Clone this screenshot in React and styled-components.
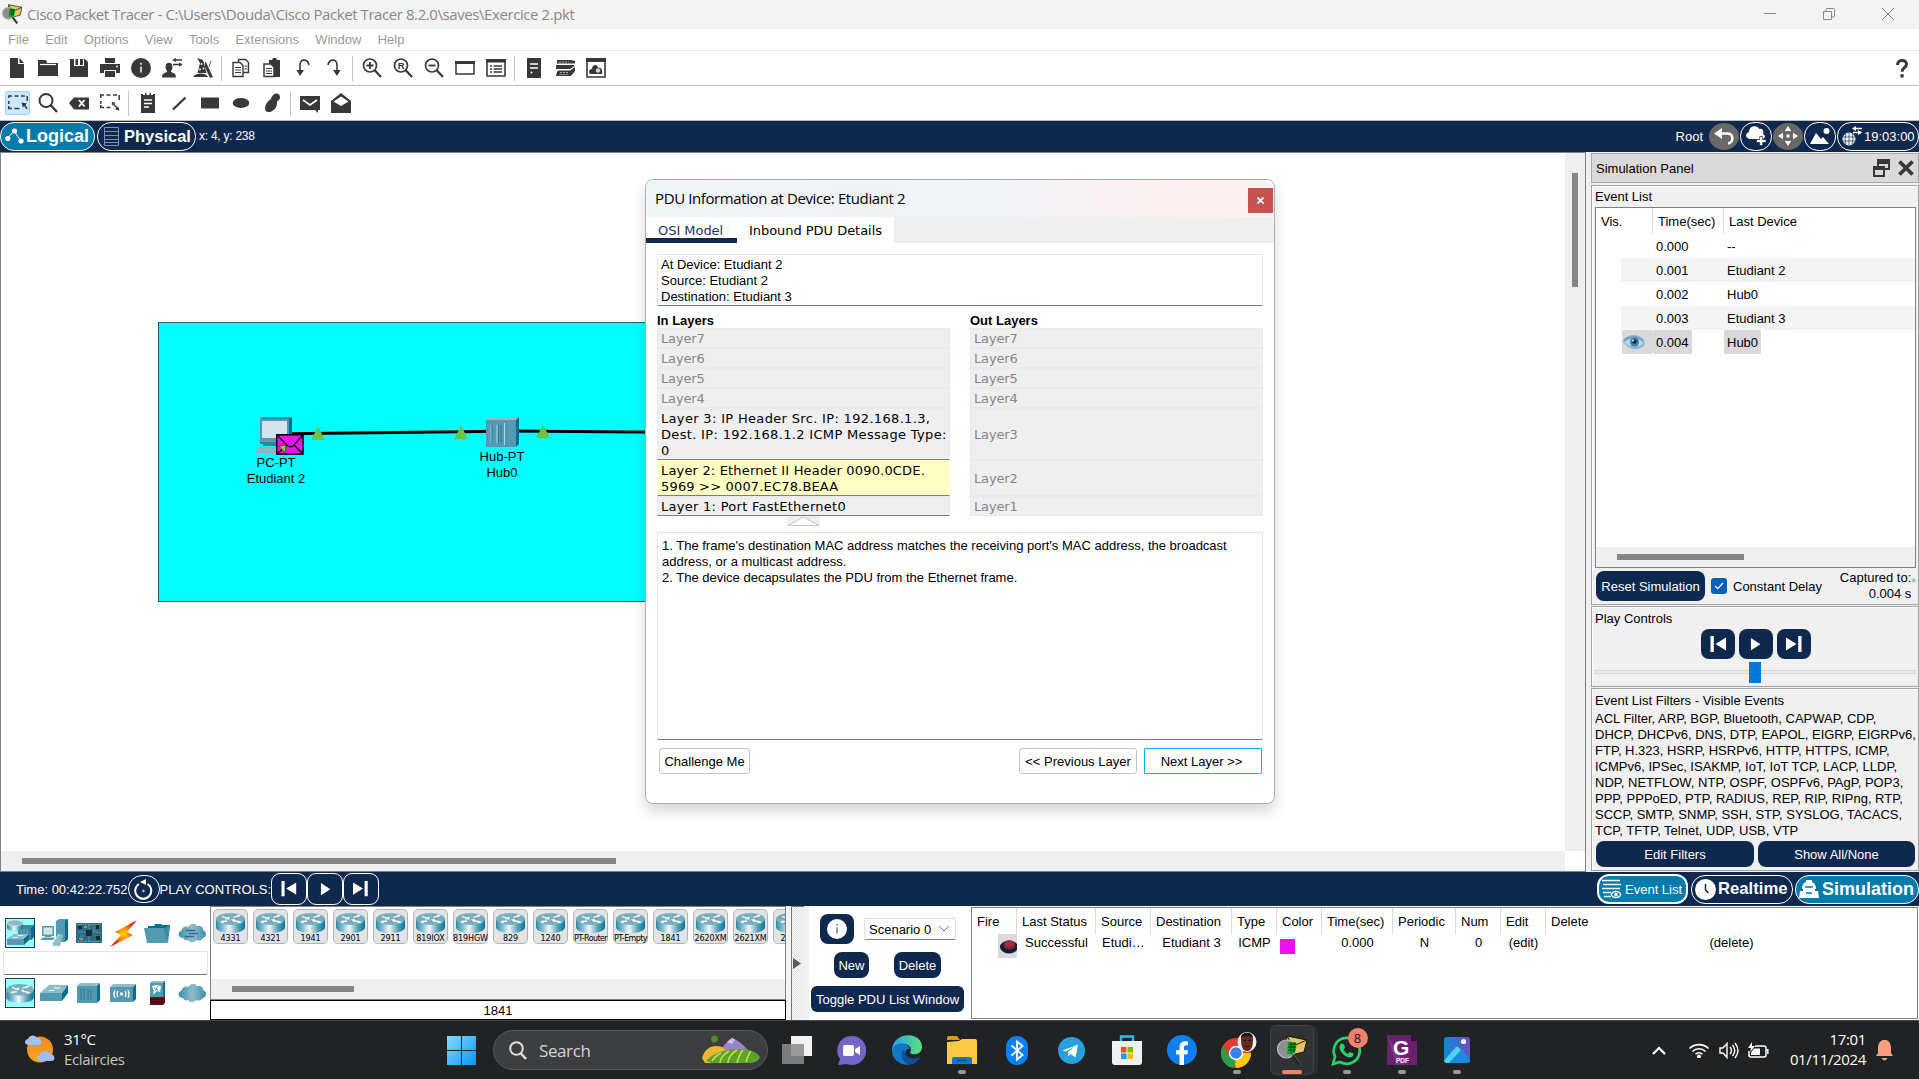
import React from "react";
import styled, { createGlobalStyle, css } from "styled-components";

const NAVY = "#0f284d";
const TEAL = "#027bab";
const INK = "#38383a";
const ARIAL = '"Liberation Sans", Arial, sans-serif';
const SEGOE = '"Open Sans", "Noto Sans", sans-serif';
const VERDANA = '"DejaVu Sans", Verdana, sans-serif';

const Global = createGlobalStyle`
  * { box-sizing: border-box; }
  body { margin: 0; overflow: hidden; font-family: ${ARIAL}; font-size: 13px; color: #000; background: #f0f0f0; }
  svg { display: block; flex: none; }
`;

const Page = styled.div`
  position: relative;
  width: 1919px;
  height: 1079px;
  display: flex;
  flex-direction: column;
  overflow: hidden;
  white-space: nowrap;
`;

/* ---------- window chrome ---------- */
const TitleBar = styled.header`
  height: 29px;
  flex: none;
  display: flex;
  align-items: center;
  padding: 0 25px 1px 2px;
  background: #f3f3f3;
  color: #888;
`;
const WindowTitle = styled.span`
  flex: 1;
  margin-left: 5px;
  font: 15px ${SEGOE};
  letter-spacing: -0.42px;
`;
const WindowButtons = styled.div`
  display: flex;
  gap: 47px;
`;
const MenuBar = styled.nav`
  height: 22px;
  flex: none;
  display: flex;
  align-items: center;
  gap: 16.2px;
  padding: 0 8px;
  background: #fff;
  border-bottom: 1px solid #eaeaea;
  color: #999;
`;
const ToolBar = styled.div`
  height: 35px;
  flex: none;
  display: flex;
  align-items: center;
  padding-left: 1px;
  background: #fff;
  border-bottom: 1px solid #bdbdbd;
`;
const ToolCell = styled.div`
  width: 31px;
  height: 24px;
  flex: none;
  display: flex;
  align-items: center;
  justify-content: center;
`;
const ActiveTool = styled.div`
  width: 25px;
  height: 24px;
  margin-left: 2px;
  display: flex;
  align-items: center;
  justify-content: center;
  background: #cce8ff;
  border: 1px solid #99d1ff;
  border-radius: 2px;
`;
const ToolRule = styled.i`
  width: 1px;
  height: 25px;
  margin: 0 3px;
  background: #c4c4c4;
`;
const HelpSlot = styled.div`
  width: 23px;
`;
const Spacer = styled.div`
  flex: 1;
`;

/* ---------- navigation bar ---------- */
const NavBar = styled.div`
  height: 31px;
  flex: none;
  display: flex;
  align-items: center;
  padding-bottom: 1px;
  background: ${NAVY};
  color: #fff;
`;
const Pill = styled.div`
  height: ${(p) => p.$h || 29}px;
  width: ${(p) => p.$w}px;
  flex: none;
  display: flex;
  align-items: center;
  gap: ${(p) => p.$gap || 0}px;
  margin-left: ${(p) => p.$ml || 0}px;
  padding-left: ${(p) => p.$pl || 0}px;
  ${(p) => p.$center && css`justify-content: center;`}
  border: ${(p) => p.$bw || 1}px solid #fff;
  border-radius: ${(p) => p.$r || 14}px;
  background: ${(p) => (p.$on ? TEAL : "transparent")};
  color: #fff;
  font-weight: ${(p) => (p.$fs ? 700 : 400)};
  font-size: ${(p) => p.$fs || 13}px;
`;
const RoundGrey = styled.div`
  width: 30px;
  height: 27px;
  margin-left: ${(p) => p.$ml}px;
  display: flex;
  align-items: center;
  justify-content: center;
  border-radius: 50%;
  background: #686868;
`;
const Coords = styled.span`
  margin-left: 3px;
  font-size: 12px;
  letter-spacing: -0.25px;
`;

/* ---------- main area ---------- */
const Main = styled.main`
  height: 720px;
  flex: none;
  display: flex;
  gap: 5px;
`;
const Workspace = styled.section`
  width: 1586px;
  display: grid;
  grid-template: 1fr 20px / 1fr 20px;
  border: 1px solid #80808a;
  background: #fff;
`;
const Canvas = styled.div`
  position: relative;
  overflow: hidden;
  background: #fff;
`;
const VBar = styled.div`
  padding: 20px 7px;
  background: #efefef;
`;
const VThumb = styled.div`
  height: 114px;
  background: #868484;
`;
const HBar = styled.div`
  height: 20px;
  display: flex;
  align-items: center;
  padding-left: ${(p) => p.$pl}px;
  background: #efefef;
`;
const HThumb = styled.div`
  height: 6px;
  width: ${(p) => p.$w}px;
  background: #868484;
`;
const CyanArea = styled.div`
  position: absolute;
  left: 157px;
  top: 169px;
  width: 900px;
  height: 280px;
  border: 1px solid #2b5a5a;
  background: #00ffff;
`;
const Topology = styled.svg`
  position: absolute;
  left: 0;
  top: 0;
`;
const NodeLabel = styled.div`
  position: absolute;
  left: ${(p) => p.$x - 62}px;
  top: ${(p) => p.$y}px;
  width: 120px;
  text-align: center;
  line-height: 16px;
`;

/* ---------- simulation panel ---------- */
const SimPanel = styled.aside`
  width: 328px;
  display: flex;
  flex-direction: column;
  padding-top: 1px;
`;
const DockTitle = styled.div`
  height: 30px;
  flex: none;
  display: flex;
  align-items: center;
  gap: 8px;
  padding: 0 4px;
  background: #d9d9d9;
  border: 1px solid #a9a9a9;
`;
const Group = styled.div`
  height: ${(p) => p.$h}px;
  flex: none;
  margin-top: ${(p) => p.$mt}px;
  padding: 0 2px 0 3px;
  display: flex;
  flex-direction: column;
  border: 1px solid #a3a3a3;
  background: #f0f0f0;
  box-shadow: inset 1px 1px #fff;
`;
const GroupTitle = styled.div`
  height: ${(p) => p.$h}px;
  flex: none;
  display: flex;
  align-items: center;
`;
const EventTable = styled.div`
  height: 361px;
  flex: none;
  display: flex;
  flex-direction: column;
  border: 1px solid #80808a;
  background: #fff;
`;
const EventHead = styled.div`
  height: 26px;
  display: grid;
  grid-template-columns: 57px 71px 1fr;
`;
const HeadCell = styled.div`
  display: flex;
  align-items: center;
  padding-left: 5px;
  border-right: ${(p) => (p.$last ? "none" : "1px solid #dcdcdc")};
`;
const EventRow = styled.div`
  height: 24px;
  margin-left: 25px;
  display: grid;
  grid-template-columns: 32px 71px 1fr;
  align-items: center;
  background: ${(p) => (p.$alt ? "#f4f4f4" : "#fff")};
`;
const EventCell = styled.span`
  height: 24px;
  justify-self: ${(p) => (p.$fill ? "stretch" : "start")};
  margin-left: ${(p) => p.$ml || 0}px;
  display: flex;
  align-items: center;
  padding: 0 ${(p) => (p.$fill ? 1 : 3)}px;
  border-radius: 2px;
  background: ${(p) => (p.$sel ? "#d9d9d9" : "transparent")};
`;
const SimControls = styled.div`
  flex: 1;
  display: flex;
  align-items: center;
  padding: 0 5px 0 1px;
`;
const DarkButton = styled.button`
  width: ${(p) => p.$w}px;
  height: ${(p) => p.$h}px;
  flex: none;
  display: flex;
  align-items: center;
  justify-content: center;
  padding: 0;
  border: none;
  border-radius: ${(p) => p.$r || 8}px;
  background: ${NAVY};
  color: #fff;
  font: 13px ${ARIAL};
  white-space: nowrap;
`;
const Check = styled.span`
  width: 16px;
  height: 16px;
  margin: 0 6px;
  display: flex;
  align-items: center;
  justify-content: center;
  border-radius: 3px;
  background: #0560ba;
`;
const Captured = styled.div`
  flex: 1;
  text-align: right;
  line-height: 16px;
`;
const Star = styled.sup`
  align-self: flex-start;
  margin: 9px -5px 0 0;
  color: #999;
  font-size: 12px;
  line-height: 12px;
`;
const PlayButtons = styled.div`
  display: flex;
  justify-content: center;
  gap: 4px;
`;
const SliderTrack = styled.div`
  height: 4px;
  margin-top: 11px;
  padding-right: 2px;
  display: flex;
  align-items: center;
  justify-content: center;
  border: 1px solid #d6d6d6;
  background: #e7eaea;
`;
const SliderThumb = styled.div`
  width: 12px;
  height: 21px;
  flex: none;
  background: #0078d7;
`;
const FilterText = styled.div`
  line-height: 16px;
  height: 128px;
`;
const FilterButtons = styled.div`
  display: flex;
  gap: 4px;
  margin: 2px 0 0 1px;
`;

/* ---------- time bar ---------- */
const TimeBar = styled.div`
  height: 34px;
  flex: none;
  display: flex;
  align-items: center;
  padding-left: 16px;
  background: ${NAVY};
  color: #fff;
`;

/* ---------- device area ---------- */
const DeviceArea = styled.div`
  height: 114px;
  flex: none;
  display: flex;
  background: #fff;
`;
const Categories = styled.div`
  width: 210px;
  flex: none;
  padding: 12px 2px 0 3px;
`;
const CategoryRow = styled.div`
  height: 30px;
  display: grid;
  grid-template-columns: repeat(6, 34.3px);
  align-items: center;
  justify-items: center;
`;
const CategoryCell = styled.div`
  width: 30px;
  height: 30px;
  display: flex;
  align-items: center;
  justify-content: center;
  border: 1px solid #22424a;
  background: #99ffff;
`;
const SearchBox = styled.div`
  height: 24px;
  margin: 3px 0;
  border: 1px solid #e2e2e2;
  border-bottom: 1px solid #777;
  border-radius: 2px;
`;
const DeviceColumn = styled.div`
  width: 576px;
  flex: none;
  display: flex;
  flex-direction: column;
`;
const DeviceList = styled.div`
  height: 94px;
  display: flex;
  flex-direction: column;
  justify-content: space-between;
  border: 1px solid #80808a;
`;
const DeviceRow = styled.div`
  display: flex;
  gap: 5px;
  padding: 2px 0 0 2px;
  overflow: hidden;
`;
const DeviceTile = styled.div`
  width: 35px;
  height: 35px;
  flex: none;
  display: flex;
  flex-direction: column;
  align-items: center;
  justify-content: space-between;
  padding: 3px 0 0;
  border: 1px solid #b4b4b4;
  border-radius: 5px;
  background: #e3e3e3;
  font: 8px ${VERDANA};
  letter-spacing: ${(p) => (p.$tight ? -0.6 : -0.1)}px;
`;
const DeviceName = styled.div`
  height: 20px;
  display: flex;
  align-items: center;
  justify-content: center;
  border: 1px solid #000;
`;
const Expander = styled.div`
  width: 23px;
  flex: none;
  display: flex;
  border-right: 5px solid #f0f0f0;
  border-left: 5px solid #f4f4f4;
`;
const ExpanderGrip = styled.div`
  flex: 1;
  display: flex;
  align-items: center;
  justify-content: center;
  padding-right: 2px;
  border-left: 1px solid #777;
  border-top: 1px solid #777;
  background: repeating-conic-gradient(#e2e2e2 0 25%, #fafafa 0 50%) 0 0 / 2px 2px;
`;
const Scenario = styled.div`
  width: 162px;
  flex: none;
  padding: 8px 8px 0 2px;
  display: flex;
  flex-direction: column;
`;
const ScenarioRow = styled.div`
  display: flex;
  align-items: center;
  margin: ${(p) => p.$m};
  gap: ${(p) => p.$gap || 0}px;
`;
const Combo = styled.div`
  width: 92px;
  height: 22px;
  display: flex;
  align-items: center;
  justify-content: space-between;
  padding: 0 6px 0 4px;
  border: 1px solid #e0e0e0;
  border-bottom-color: #808080;
  border-radius: 2px;
`;
const PduTable = styled.div`
  flex: 1;
  margin: 1px 1px 1px 0;
  border: 1px solid #80808a;
`;
const pduColumns = "45px 79px 55px 81px 45px 45px 71px 63px 45px 45px 1fr";
const PduHead = styled.div`
  height: 26px;
  display: grid;
  grid-template-columns: ${pduColumns};
`;
const PduRow = styled.div`
  height: 24px;
  display: grid;
  grid-template-columns: ${pduColumns};
`;
const PduCell = styled.div`
  height: 17px;
  display: flex;
  align-items: center;
  justify-content: ${(p) => (p.$left ? "flex-start" : "center")};
  padding-left: ${(p) => p.$pl || 0}px;
`;
const FireCell = styled.div`
  width: 19px;
  height: 24px;
  justify-self: end;
  display: flex;
  align-items: center;
  padding-left: 2px;
  background: #d9d9d9;
`;
const Swatch = styled.div`
  width: 15px;
  height: 15px;
  margin: 5px 0 0 3px;
  background: #f00ff0;
`;

/* ---------- PDU dialog ---------- */
const Dialog = styled.section`
  position: absolute;
  left: 645px;
  top: 179px;
  width: 630px;
  height: 625px;
  display: flex;
  flex-direction: column;
  border: 1px solid #b0b0b0;
  border-radius: 8px;
  background: #fff;
  box-shadow: 0 8px 14px rgba(0, 0, 0, 0.16);
  overflow: hidden;
`;
const DialogTitle = styled.div`
  height: 37px;
  flex: none;
  display: flex;
  align-items: center;
  justify-content: space-between;
  padding: 0 1px 2px 9px;
  background: linear-gradient(90deg, #eff4f7 0%, #f1f3f6 55%, #fbeff0 85%, #fdf2f2 100%);
  font: 15px ${SEGOE};
  letter-spacing: -0.39px;
`;
const CloseRed = styled.button`
  width: 25px;
  height: 25px;
  margin-top: 5px;
  padding: 0;
  display: flex;
  align-items: center;
  justify-content: center;
  border: none;
  background: #c75050;
`;
const Tabs = styled.div`
  height: 26px;
  flex: none;
  display: flex;
  background: #efefef;
  font: 13px ${VERDANA};
  letter-spacing: -0.04px;
`;
const Tab = styled.div`
  width: ${(p) => p.$w}px;
  display: flex;
  align-items: center;
  padding: 6px 0 0 12px;
  background: #fff;
  color: ${(p) => (p.$on ? "#1b3563" : "#000")};
  border-bottom: 5px solid ${(p) => (p.$on ? NAVY : "#fff")};
`;
const DialogBody = styled.div`
  flex: 1;
  display: flex;
  flex-direction: column;
  padding: 11px 11px 0;
`;
const LineBox = styled.div`
  height: ${(p) => p.$h}px;
  flex: none;
  padding: ${(p) => p.$p};
  border: 1px solid #e4e4e4;
  border-bottom: 1px solid #7d7d7d;
  line-height: 16px;
`;
const LayerColumns = styled.div`
  display: grid;
  grid-template-columns: 293px 293px;
  justify-content: space-between;
  margin-top: 5px;
`;
const LayerTitle = styled.div`
  height: 17px;
  line-height: 19px;
  font-weight: 700;
`;
const LayerStack = styled.div`
  display: grid;
  grid-template-rows: repeat(4, 20px) 52px 36px 20px;
  font: 13px/16px ${VERDANA};
`;
const Layer = styled.div`
  display: flex;
  align-items: center;
  padding: 2px 0 0 3px;
  white-space: pre;
  letter-spacing: ${(p) => p.$ls ?? -0.15}px;
  background: ${(p) => (p.$hot ? "#ffffc4" : "#efefef")};
  color: ${(p) => (p.$filled ? "#000" : "#868686")};
  border: 1px solid ${(p) => (p.$hot ? "#ffffc4" : "#eaeaea")};
  border-bottom-color: ${(p) => (p.$filled ? "#7d7d7d" : "#e9e9e9")};
`;
const Collapse = styled.div`
  width: 33px;
  height: 10px;
  margin: 0 0 6px 130px;
  background: #efefef;
`;
const DialogButtons = styled.div`
  display: flex;
  gap: 7px;
  padding: 8px 1px 0 2px;
`;
const LightButton = styled.button`
  width: ${(p) => p.$w}px;
  height: 26px;
  padding: 0 ${(p) => (p.$focus ? 3 : 0)}px 0 0;
  border: 1px solid ${(p) => (p.$focus ? "#0db2e0" : "#c4c4c4")};
  border-radius: ${(p) => (p.$focus ? 1 : 3)}px;
  background: #fdfdfd;
  font: 13px ${ARIAL};
`;

/* ---------- taskbar ---------- */
const TaskBar = styled.footer`
  height: 59px;
  flex: none;
  display: flex;
  align-items: center;
  background: #202224;
  border-top: 1px solid #46484a;
  color: #fff;
  font: 15px ${SEGOE};
`;
const Weather = styled.div`
  width: 447px;
  display: flex;
  align-items: center;
  gap: 9px;
  padding: 0 0 2px 25px;
  line-height: 20px;
  letter-spacing: -0.35px;
`;
const Muted = styled.div`
  color: #c4c4c4;
`;
const TaskSearch = styled.div`
  width: 275px;
  height: 40px;
  margin: 0 1px 0 17px;
  display: flex;
  align-items: center;
  padding: 0 7px 0 15px;
  border: 1px solid #57595b;
  border-radius: 20px;
  background: #3c3e40;
  color: #d4d4d4;
  font-size: 17px;
`;
const SearchWord = styled.span`
  flex: 1;
  margin-left: 12px;
  letter-spacing: -0.4px;
`;
const TaskItem = styled.div`
  width: 55px;
  height: 58px;
  flex: none;
  display: flex;
  flex-direction: column;
  align-items: center;
  padding-top: 4px;
`;
const TaskTile = styled.div`
  position: relative;
  width: 44px;
  height: 50px;
  flex: none;
  display: flex;
  align-items: center;
  justify-content: center;
  padding-left: ${(p) => p.$shift || 0}px;
`;
const ActiveTile = styled(TaskTile)`
  border-radius: 6px;
  background: #303234;
  border: 1px solid #404244;
  box-shadow: 5px 0 0 -1px #2a2c2e;
`;
const Dot = styled.i`
  position: relative;
  width: ${(p) => (p.$wide ? 20 : 8)}px;
  height: 4px;
  margin-top: -5px;
  border-radius: 2px;
  background: ${(p) => (p.$wide ? "#f4846a" : "#9a9a9a")};
`;
const Badge = styled.span`
  position: absolute;
  right: 1px;
  top: 3px;
  width: 20px;
  height: 20px;
  display: flex;
  align-items: center;
  justify-content: center;
  border-radius: 50%;
  background: #f4816b;
  color: #111;
  font-size: 13px;
`;
const Tray = styled.div`
  display: flex;
  align-items: center;
  gap: 9px;
  margin-left: auto;
  padding-right: 26px;
`;
const TrayChevron = styled.div`
  margin-right: 13px;
`;
const Clock = styled.div`
  width: 89px;
  padding: 0 1px 2px 0;
  text-align: right;
  line-height: 20px;
  letter-spacing: -0.35px;
`;

/* ---------- drawings ---------- */
const Ico = ({ w = 20, h = 20, children }) => (
  <svg width={w} height={h} viewBox={`0 0 ${w} ${h}`} fill={INK}>
    {children}
  </svg>
);
const line = { fill: "none", stroke: INK, strokeWidth: 2 };
const thin = { fill: "none", stroke: INK, strokeWidth: 1.5 };

const tools = {
  file: <path d="M3 0h8v6h6v14H3zM12.500 0l4.500 5h-4.500z" />,
  folder: (
    <>
      <path d="M0 2h8l1 3h11v13H0z" />
      <path d="M2 6.500h16" stroke="#fff" strokeWidth="1.200" />
    </>
  ),
  save: (
    <>
      <path d="M1 1h15l3 3v15H1z" />
      <path d="M5 1h10v7H5z" fill="#fff" />
      <path d="M6.500 1h2.500v6h-2.500zM11 1h3v6h-3z" />
    </>
  ),
  print: (
    <>
      <path d="M5 0h10v5H5zM0 6h20v9h-4v-3H4v3H0z" />
      <path d="M5 13h10v6H5z" />
      <circle cx="17" cy="8.500" r="0.900" fill="#fff" />
    </>
  ),
  info: (
    <>
      <circle cx="10" cy="10" r="10" />
      <path d="M10 8.500v6" stroke="#d8d8d8" strokeWidth="1.800" />
      <circle cx="10" cy="5.800" r="1.100" fill="#d8d8d8" />
    </>
  ),
  user: (
    <>
      <ellipse cx="7" cy="9" rx="3.400" ry="4.300" />
      <path d="M0 19.500c0-4.500 3-4.500 5-5.500v-2h4v2c2 1 5 1 5 5.500z" />
      <path d="M12 2h8M11 6.500h8" {...thin} />
      <path d="M10 2l4-2v4zM21 6.500l-4-2v4z" />
    </>
  ),
  wizard: (
    <>
      <path d="M4 0l6 2 3.500 13H4.500L7 5zM0 19c2-3 5-3.500 8-3.500s5 .5 7 3.500z" />
      <path d="M12.500 4l7 15-2.500.3L12 8zM18 3l-2 6" stroke={INK} strokeWidth=".8" />
      <circle cx="8.500" cy="6" r="0.900" fill="#fff" />
      <circle cx="7" cy="11.500" r="1" fill="#fff" />
      <circle cx="10.500" cy="10.500" r="0.900" fill="#fff" />
    </>
  ),
  copy: (
    <g fill="#fff" stroke={INK} strokeWidth="1.400">
      <path d="M7.500 1.500h7l3 3v10h-10z" />
      <path d="M2 4.500h7l3 3v11H2z" />
      <path d="M4 9.500h6M4 12h6M4 14.500h6M13.500 8h3M13.500 11h3" strokeWidth="1.100" />
    </g>
  ),
  paste: (
    <>
      <path d="M7 2h3l1-2h3l1 2h3v17H7z" />
      <path d="M2 6h7l3 3v9.500H2z" fill="#fff" stroke={INK} strokeWidth="1.500" />
      <path d="M4 10.500h6M4 13h6M4 15.500h6" stroke={INK} strokeWidth="1.100" />
    </>
  ),
  undo: (
    <>
      <path d="M7 14V7c0-7 8-6 9 0" {...line} strokeWidth="1.600" />
      <path d="M3.500 12L7 18l4-6z" />
    </>
  ),
  redo: (
    <>
      <path d="M13 14V7c0-7-8-6-9 0" {...line} strokeWidth="1.600" />
      <path d="M9 12l4 6 3.500-6z" />
    </>
  ),
  zoomIn: (
    <>
      <circle cx="8" cy="7.500" r="6.500" {...line} strokeWidth="1.700" />
      <path d="M12.500 12l6.500 7" {...line} strokeWidth="2.200" />
      <path d="M4.500 7.500h7M8 4v7" {...line} strokeWidth="1.800" />
    </>
  ),
  zoomReset: (
    <>
      <circle cx="8" cy="7.500" r="6.500" {...line} strokeWidth="1.700" />
      <path d="M12.500 12l6.500 7" {...line} strokeWidth="2.200" />
      <text x="4.800" y="11" fontSize="9.500" fontWeight="700">R</text>
    </>
  ),
  zoomOut: (
    <>
      <circle cx="8" cy="7.500" r="6.500" {...line} strokeWidth="1.700" />
      <path d="M12.500 12l6.500 7" {...line} strokeWidth="2.200" />
      <path d="M4.500 7.500h7" {...line} strokeWidth="1.800" />
    </>
  ),
  window: (
    <>
      <path d="M1 4h18v12H1z" {...line} strokeWidth="1.500" />
      <path d="M0 3h20v3H0z" />
    </>
  ),
  list: (
    <>
      <path d="M1 2h18v16H1z" {...line} strokeWidth="1.600" />
      <path d="M0 1h20v3.500H0z" />
      <path d="M4 8h2M4 11h2M4 14h2M7.500 8H16M7.500 11H16M7.500 14H16" {...thin} />
    </>
  ),
  server: (
    <>
      <path d="M3 0h14v20H3z" />
      <path d="M6 6h8M6 10h8" stroke="#fff" strokeWidth="1.400" />
      <circle cx="7.500" cy="14.500" r="1" fill="#fff" />
    </>
  ),
  stack: (
    <>
      <path d="M2 2h14l4 1v2.500H2zM1 7h18v1.500l-4 2.500H1z" />
      <path d="M3 12.500h12l5-3.500v4l-4 5H1l1-4z" />
      <path d="M4 4h10M5 14.500h9M4.500 16.500h9" stroke="#aaa" strokeWidth="1" strokeDasharray="2 1" />
    </>
  ),
  cloudBox: (
    <>
      <path d="M1 1h18v18H1z" {...line} strokeWidth="1.600" />
      <path d="M0 0h20v4H0z" />
      <path d="M4 16c-2-3 0-5 2-5 0-5 6-5 6-1 3-1 5 2 4 6z" />
      <circle cx="12" cy="12.500" r="2.200" fill="#fff" opacity=".8" />
    </>
  ),
  select: (
    <>
      <path d="M.8 5V3H4M6.500 3h4M13 3h4M19.200 3v5M.8 8v3M.8 13v2.500H4M6.500 15.500h5" {...thin} />
      <path d="M13.500 9.500l5.500 1-1.600 1.500 2.300 3.200-1.300 1-2.300-3.200-1.300 1.600z" />
    </>
  ),
  search: (
    <>
      <circle cx="8" cy="7.500" r="6.500" {...line} />
      <path d="M12.500 12l6.500 7" {...line} strokeWidth="2.400" />
    </>
  ),
  erase: (
    <>
      <path d="M0 10l5-5.500h15v12H5z" />
      <path d="M10 7l5.500 6.500M15.500 7L10 13.500" stroke="#fff" strokeWidth="1.900" />
    </>
  ),
  resize: (
    <>
      <path d="M.8 5V2H4M6.500 2h4M13 2h4M19.200 2v5M.8 8v3M.8 12v2.500H4M6.500 14.500h4" {...thin} />
      <path d="M11.500 9l4 .8-2.800 3zM19.500 17.500l-4.500-1 3.300-3z" />
      <path d="M13 10.500l5 5.500" {...line} strokeWidth="1.300" />
    </>
  ),
  note: (
    <>
      <path d="M3 1h2v1h2V0h1.500v2h3V0h1.500v2h2V1h2v19H3z" />
      <path d="M6 7h8M6 10.500h8M6 14h5" stroke="#fff" strokeWidth="1.300" />
    </>
  ),
  line: <path d="M4 16.500L16.500 4.500" {...line} strokeWidth="2.300" />,
  rect: <path d="M1 4.500h18v11H1z" />,
  ellipse: <ellipse cx="10" cy="10" rx="8.300" ry="5" />,
  blob: <path d="M9 6c1-5 6-7 8-4.500s1 5-2 7c0 3 0 6-4 9s-8 1.500-8-2 2-7 6-9.500z" />,
  mail: (
    <>
      <path d="M0 3h20v14h-2v3l-3-3H0z" />
      <path d="M3 7l7 5 7-5" fill="none" stroke="#fff" strokeWidth="1.600" />
    </>
  ),
  openMail: (
    <>
      <path d="M0 8l10-8 10 8v12H0z" />
      <path d="M2.500 8.500L10 3.500l7.500 5L10 13z" fill="#fff" />
    </>
  ),
};

const Prev = ({ s = 1 }) => (
  <svg width={16 * s} height={16 * s} viewBox="0 0 16 16" fill="#fff">
    <path d="M0.500 0h3.300v16H.5zM16 1.500v13L5.500 8z" />
  </svg>
);
const Play = ({ s = 1 }) => (
  <svg width={11 * s} height={13 * s} viewBox="0 0 11 13" fill="#fff">
    <path d="M1 0v13l10-6.500z" />
  </svg>
);
const Next = ({ s = 1 }) => (
  <svg width={16 * s} height={16 * s} viewBox="0 0 16 16" fill="#fff">
    <path d="M12.200 0h3.300v16h-3.300zM0 1.500v13L10.500 8z" />
  </svg>
);

const HiddenDefs = styled.div`
  position: absolute;
  width: 0;
  height: 0;
  overflow: hidden;
`;
const Defs = () => (
  <HiddenDefs>
    <svg width="1" height="1">
      <defs>
        <linearGradient id="cyl">
          <stop offset="0" stopColor="#2f8ba8" />
          <stop offset=".25" stopColor="#8fc3d2" />
          <stop offset=".45" stopColor="#f4fafb" />
          <stop offset=".75" stopColor="#5ba3b8" />
          <stop offset="1" stopColor="#0f7396" />
        </linearGradient>
        <linearGradient id="cld">
          <stop offset="0" stopColor="#3f90ab" />
          <stop offset=".5" stopColor="#8cbccb" />
          <stop offset="1" stopColor="#3e90ab" />
        </linearGradient>
      </defs>
    </svg>
  </HiddenDefs>
);

const Router = ({ w = 29, h = 20 }) => (
  <svg width={w} height={h} viewBox="0 0 29 20">
    <path d="M0 6v8c0 8 29 8 29 0V6z" fill="url(#cyl)" />
    <ellipse cx="14.500" cy="6" rx="14.500" ry="6" fill="#79adc0" />
    <path d="M6 3.500l6 2M11 8l-6 1M17 4.500l6-2M17 7.500l7 1.500" stroke="#fff" strokeWidth="1.300" />
    <path d="M13.500 3.500v3l-5-.2zM3.500 8.500l4.500-1v2.500zM25 1.800l-5 .3 2.500 2zM15 6.500l4-.5-1 3zM26 9.800l-4.500.4 1.500-2.500z" fill="#fff" />
  </svg>
);
const CloudIcon = ({ lines }) => (
  <svg width="28" height="19" viewBox="0 0 28 19">
    <path d="M5 14C0 14-1 8 3.500 6.500 5 2 9 2 10.500 3c2-4 7-4 8.500-.5C23 1 25.500 4 25 6c4 1.500 4 7 0 8-2 3-5 3-7 2-2 3-6 3-8 0-2 1-4 0-5-2z" fill="url(#cld)" />
    {lines && <path d="M8 6.500h9M11 9.500h9M7 12.500h9" stroke="#276f88" strokeWidth="1.500" />}
  </svg>
);
const Box3D = ({ w, h, d = 3, children }) => (
  <svg width={w} height={h} viewBox={`0 0 ${w} ${h}`}>
    <path d={`M0 ${d}L${d} 0H${w}L${w - d} ${d}z`} fill="#8dbccb" />
    <path d={`M${w - d} ${d}L${w} 0V${h - d}L${w - d} ${h}z`} fill="#066d8d" />
    <path d={`M0 ${d}H${w - d}V${h}H0z`} fill="#529ab1" />
    {children}
  </svg>
);
const NetDevices = () => (
  <svg width="28" height="28" viewBox="0 0 28 28">
    <path d="M12 9l4-3h12v12l-3 3H12z" fill="#3c8ba5" />
    <path d="M25 9l3-3v12l-3 3z" fill="#066d8d" />
    <path d="M15 10v9M18 10v9M21 10v9" stroke="#6fa9bb" />
    <path d="M1 4v5c0 4 16 4 16 0V4z" fill="url(#cyl)" />
    <ellipse cx="9" cy="4" rx="8" ry="3" fill="#8ebccb" stroke="#dceef2" strokeWidth=".6" />
    <path d="M1 20l7-5h15l-5 5z" fill="#8dbccb" />
    <path d="M1 20h17v6H1z" fill="#529ab1" />
    <path d="M18 20l5-5v6l-5 5z" fill="#066d8d" />
    <path d="M7 18.500h5M12 16.500h5" stroke="#fff" />
  </svg>
);
const EndDevices = () => (
  <svg width="28" height="28" viewBox="0 0 28 28">
    <path d="M16 2l3-2h9v20l-3 3h-9z" fill="#529ab1" />
    <path d="M25 2l3-2v20l-3 3z" fill="#066d8d" />
    <path d="M2 7h12v10H2z" fill="#529ab1" />
    <path d="M3.500 8.500h9v7h-9z" fill="#d3e8ee" />
    <path d="M0 21h13l2-2.500H3zM5 17h6v2H5z" fill="#529ab1" />
    <path d="M12 25l7-10 4 1-3 11h-6z" fill="#8dbccb" />
    <path d="M12 25l7-10" stroke="#d8ecf1" />
  </svg>
);
const Board = () => (
  <svg width="26" height="20" viewBox="0 0 26 20">
    <path d="M0 0h26v20H0z" fill="#2b6d86" />
    <path d="M10 7h6v6h-6zM2 3h4v3H2zM20 2h3v4h-3zM20 13h4v4h-4z" fill="#22292c" />
    <path d="M2 1.500h22M2 18.500h22M3 9h6M17 9h7M4 13h4M13 2v4M13 14v4M18 4v5" stroke="#7db2c2" strokeWidth=".8" strokeDasharray="1.500 1" />
    <path d="M3 15h4v2H3zM8 3h3v2H8z" fill="#b48a5a" />
  </svg>
);
const Bolt = () => (
  <svg width="27" height="27" viewBox="0 0 27 27">
    <defs>
      <radialGradient id="bolt">
        <stop offset="0" stopColor="#ffd400" />
        <stop offset=".45" stopColor="#ff8a00" />
        <stop offset="1" stopColor="#f01414" />
      </radialGradient>
    </defs>
    <path d="M27 0L5 12l6 3L0 27l23-12-6-3z" fill="url(#bolt)" />
  </svg>
);
const Folder3D = () => (
  <svg width="27" height="19" viewBox="0 0 27 19">
    <path d="M4 2h6l1-2h6l1 1h8l-3 17H4z" fill="#066d8d" />
    <path d="M0 4h20l4 15H3z" fill="#529ab1" />
    <path d="M20 4l6-2-2 17z" fill="#3d8ba5" />
  </svg>
);
const Firewall = () => (
  <svg width="15" height="24" viewBox="0 0 15 24">
    <path d="M0 2l2-2h13l-1 2z" fill="#8dbccb" />
    <path d="M0 2h13v14H0z" fill="#529ab1" />
    <path d="M13 2l2-2v14l-2 2z" fill="#066d8d" />
    <path d="M2 5l5-1 4 1-1 6-3-1-4 4 1-4z" fill="#fff" />
    <path d="M4 7l4 2M8 5l-3 5" stroke="#529ab1" strokeWidth=".9" />
    <path d="M0 16h13l2-2v8l-2 2H0z" fill="#5c0f14" />
    <path d="M0 18.500h13M0 21h13" stroke="#3a0408" />
  </svg>
);
const TracerLogo = ({ s = 20 }) => (
  <svg width={s} height={s} viewBox="0 0 30 30">
    <path d="M10 1l20 4-3 12-13 3-5-8z" fill="#e8c560" stroke="#111" />
    <path d="M10 1l6 10 14-6" fill="none" stroke="#111" />
    <circle cx="9.500" cy="14" r="9" fill="#8f8f8b" stroke="#bdbdb9" strokeWidth="1.200" />
    <path d="M11 7h8c1 4 0 10-3 12h-6z" fill="#00b12c" />
    <path d="M12 9h7M11 12h8M11 15h7M14 7v12M17 8v10" stroke="#043a0c" />
    <path d="M16 20l7 9" stroke="#222" strokeWidth="3" />
    <path d="M17.500 20.500l6 8" stroke="#777" strokeWidth=".8" />
  </svg>
);
const Eye = () => (
  <svg width="22" height="15" viewBox="0 0 22 15">
    <path d="M0 5C5-2 17-1 21 5l1 5c-5 6-15 6-22-3z" fill="#8fb8d4" />
    <path d="M1 7c5-4 14-5 20 1-5 4-13 5-20-1z" fill="#bcd6e8" />
    <circle cx="11.500" cy="7" r="4.500" fill="#3f7fae" />
    <circle cx="11.500" cy="6.500" r="2.200" fill="#10293f" />
    <circle cx="10" cy="5.500" r=".9" fill="#fff" />
    <path d="M1 6c5-5 14-6 20 1" fill="none" stroke="#5f87a4" />
  </svg>
);

/* ---------- data ---------- */
const menus = ["File", "Edit", "Options", "View", "Tools", "Extensions", "Window", "Help"];
const mainTools = ["file", "folder", "save", "print", "info", "user", "wizard", "|", "copy", "paste", "undo", "redo", "|", "zoomIn", "zoomReset", "zoomOut", "window", "list", "|", "server", "stack", "cloudBox"];
const drawTools = ["search", "erase", "resize", "|", "note", "line", "rect", "ellipse", "blob", "|", "mail", "openMail"];
const events = [["0.000", "--"], ["0.001", "Etudiant 2"], ["0.002", "Hub0"], ["0.003", "Etudiant 3"], ["0.004", "Hub0"]];
const filters = [
  "ACL Filter, ARP, BGP, Bluetooth, CAPWAP, CDP,",
  "DHCP, DHCPv6, DNS, DTP, EAPOL, EIGRP, EIGRPv6,",
  "FTP, H.323, HSRP, HSRPv6, HTTP, HTTPS, ICMP,",
  "ICMPv6, IPSec, ISAKMP, IoT, IoT TCP, LACP, LLDP,",
  "NDP, NETFLOW, NTP, OSPF, OSPFv6, PAgP, POP3,",
  "PPP, PPPoED, PTP, RADIUS, REP, RIP, RIPng, RTP,",
  "SCCP, SMTP, SNMP, SSH, STP, SYSLOG, TACACS,",
  "TCP, TFTP, Telnet, UDP, USB, VTP",
];
const devices = ["4331", "4321", "1941", "2901", "2911", "819IOX", "819HGW", "829", "1240", "PT-Router", "PT-Empty", "1841", "2620XM", "2621XM", "2811"];
const pduHeads = ["Fire", "Last Status", "Source", "Destination", "Type", "Color", "Time(sec)", "Periodic", "Num", "Edit", "Delete"];
const inLayers = [
  { t: "Layer7" }, { t: "Layer6" }, { t: "Layer5" }, { t: "Layer4" },
  { t: "Layer 3: IP Header Src. IP: 192.168.1.3,\nDest. IP: 192.168.1.2 ICMP Message Type:\n0", filled: true, ls: 0.33 },
  { t: "Layer 2: Ethernet II Header 0090.0CDE.\n5969 >> 0007.EC78.BEAA", filled: true, hot: true, ls: 0.17 },
  { t: "Layer 1: Port FastEthernet0", filled: true, ls: 0.28 },
];
const outLayers = [7, 6, 5, 4, 3, 2, 1].map((n) => ({ t: "Layer" + n }));

const taskApps = [
  { icon: <svg width="30" height="28"><path d="M9 0h21v20H9z" fill="#f2f2f2" /><path d="M0 8h22v20H0z" fill="#8c8c8c" opacity=".85" /></svg> },
  { icon: <svg width="29" height="29" viewBox="0 0 29 29"><path d="M14.500 0a14.500 14.500 0 1 1-5 28L1 29l2-6A14.500 14.500 0 0 1 14.500 0z" fill="#7466c8" /><rect x="6" y="9" width="11" height="11" rx="2" fill="#fff" /><path d="M18 13l5-3v9l-5-3z" fill="#fff" /></svg> },
  { icon: <svg width="30" height="30" viewBox="0 0 30 30"><defs><linearGradient id="eg" x1="0" x2="1"><stop offset="0" stopColor="#1fa4e8" /><stop offset="1" stopColor="#5fe07a" /></linearGradient></defs><path d="M0 14C2-4 30-4 30 12c0 7-8 9-12 6 3-6-2-9-6-9C6 9 0 12 0 18z" fill="url(#eg)" /><path d="M0 15C3 6 16 7 18 14c-5-2-8 8 2 11 3 0 6-1 8-3-6 10-18 9-23 4C1 23 0 19 0 15z" fill="#1277c9" /><path d="M12 14c-5 5-2 14 6 15.500 4-.5 8-3 10-7.500-9 4-15 0-16-8z" fill="#0c4f98" /></svg> },
  { dot: 1, icon: <svg width="30" height="28" viewBox="0 0 30 28"><path d="M0 2q0-2 2-2h8l3 4H0z" fill="#d69b12" /><path d="M0 6l12-1 3-2h13q2 0 2 2v23H0z" fill="#fdca45" /><path d="M5 28v-5q0-2 2-2h16q2 0 2 2v5z" fill="#1178cc" /><path d="M10 24.500h10" stroke="#0a4d8c" strokeWidth="1.500" /></svg> },
  { icon: <svg width="22" height="29" viewBox="0 0 22 29"><rect width="22" height="29" rx="11" fill="#0b80f7" /><path d="M5.500 9.500l11 9.500-5.500 4.500V5.500L16.500 10l-11 9.500" fill="none" stroke="#fff" strokeWidth="1.800" /></svg> },
  { icon: <svg width="27" height="27" viewBox="0 0 27 27"><circle cx="13.500" cy="13.500" r="13.500" fill="#29a0dc" /><path d="M4.500 13.500L20 7.500l-2.500 13-5-3.500-2.300 2.300-.2-4.300 7-6-9 5.500z" fill="#fff" /></svg> },
  { icon: <svg width="30" height="30" viewBox="0 0 30 30"><path d="M9 6V1.500h12V6" fill="none" stroke="#31b7f0" strokeWidth="2.400" /><path d="M0 6h30v21q0 3-3 3H3q-3 0-3-3z" fill="#f0f0f0" /><path d="M9 12h5.500v5.500H9z" fill="#f25022" /><path d="M15.500 12H21v5.500h-5.500z" fill="#7fba00" /><path d="M9 18.500h5.500V24H9z" fill="#00a4ef" /><path d="M15.500 18.500H21V24h-5.500z" fill="#ffb900" /></svg> },
  { icon: <svg width="30" height="30" viewBox="0 0 30 30"><circle cx="15" cy="15" r="15" fill="#0f7ef0" /><path d="M12.500 30V19.500H9v-4.300h3.500v-3c0-4 2.500-6 5.500-6l3 .3v3.700h-2c-1.500 0-2 1-2 2v3h4l-.7 4.300H17V30z" fill="#fff" /></svg> },
  { dot: 1, shift: 5, icon: (
    <svg width="36" height="36" viewBox="0 0 36 36">
      <circle cx="15" cy="21" r="15" fill="#e33b2e" />
      <path d="M15 21h15c0 8-6 15-15 15l-2-8z" fill="#fdc913" />
      <path d="M2 13.500L8.500 25l6.500 4-3 7A15 15 0 0 1 2 13.500z" fill="#2c9f4b" />
      <circle cx="15" cy="21" r="7.200" fill="#fff" />
      <circle cx="15" cy="21" r="5.700" fill="#3b7fe8" />
      <ellipse cx="26" cy="10" rx="9.500" ry="10" fill="#eee" />
      <path d="M20 7c0-8 12-8 12 0 0 6-1 12-6 12s-6-6-6-12z" fill="#5b2e1e" />
      <path d="M20 6c0-7 12-7 12 0-2-3-10-3-12 0z" fill="#1b1110" />
      <path d="M22.500 8.500h2.500M27.500 8.500H30M24 14.500h4" stroke="#1e0f0a" />
    </svg>
  ) },
  { active: 1, icon: <TracerLogo s={30} /> },
  { dot: 1, badge: "8", icon: <svg width="31" height="31" viewBox="0 0 31 31"><path d="M2 29l2-7.500A13 13 0 1 1 9 27z" fill="none" stroke="#27d165" strokeWidth="2.700" /><path d="M10 8.500l3 .5 1 4-1.500 1.500c1 2 2.500 3.500 4.500 4.500l1.500-2 4 1.500c0 3-2 4-4 4C13 21.500 8 16 8.500 11z" fill="#27d165" /></svg> },
  { dot: 1, icon: <svg width="30" height="30" viewBox="0 0 30 30"><path d="M0 0h24l6 6v24H0z" fill="#6a2270" /><path d="M0 0l18 30H9z" fill="#84488a" opacity=".5" /><path d="M24 0v6h6z" fill="#35103a" /><text x="6" y="20" fontSize="21" fontWeight="700" fill="#fff" fontFamily="Liberation Sans">G</text><text x="9" y="28" fontSize="6.500" fontWeight="700" fill="#fff" fontFamily="Liberation Sans">PDF</text></svg> },
  { dot: 1, icon: <svg width="26" height="26" viewBox="0 0 26 26"><defs><linearGradient id="ph" x1="0" y1="0" x2="1" y2="0"><stop offset="0" stopColor="#1287d8" /><stop offset="1" stopColor="#6a51b8" /></linearGradient></defs><rect width="26" height="26" rx="3" fill="url(#ph)" /><path d="M0 23L11 11q2-3 5 0l10 11v1q0 3-3 3H3q-3 0-3-3z" fill="#1b8be0" /><path d="M0 24L11 11q2-3 4 0l2 2L5 26H3q-2 0-3-2z" fill="#4fd0f5" /><circle cx="19.500" cy="4.500" r="2.600" fill="#f2f2fa" /></svg> },
];

const Tools = ({ names }) =>
  names.map((n, i) =>
    n === "|" ? <ToolRule key={i} /> : (
      <ToolCell key={i}>
        <Ico>{tools[n]}</Ico>
      </ToolCell>
    )
  );

const LayerList = ({ title, rows }) => (
  <div>
    <LayerTitle>{title}</LayerTitle>
    <LayerStack>
      {rows.map((r) => (
        <Layer key={r.t} $filled={r.filled} $hot={r.hot} $ls={r.ls}>{r.t}</Layer>
      ))}
    </LayerStack>
  </div>
);

export default function App() {
  return (
    <Page>
      <Global />
      <Defs />
      <TitleBar>
        <TracerLogo s={20} />
        <WindowTitle>Cisco Packet Tracer - C:\Users\Douda\Cisco Packet Tracer 8.2.0\saves\Exercice 2.pkt</WindowTitle>
        <WindowButtons>
          <svg width="12" height="12" stroke="#888"><path d="M0 5.500h12" /></svg>
          <svg width="12" height="12" stroke="#888" fill="none"><path d="M.5 3.500h8v8h-8zM3 3V1.500q0-1 1-1h6.500q1 0 1 1V8q0 1-1 1H9" /></svg>
          <svg width="12" height="12" stroke="#888"><path d="M0 0l12 12M12 0L0 12" /></svg>
        </WindowButtons>
      </TitleBar>
      <MenuBar>{menus.map((m) => <span key={m}>{m}</span>)}</MenuBar>
      <ToolBar>
        <Tools names={mainTools} />
        <Spacer />
        <HelpSlot>
          <Ico w={12} h={19}>
            <path d="M1.500 6c0-6 9-6 9-.8C10.500 8.500 6 9 6 12.800" fill="none" stroke={INK} strokeWidth="3" />
            <circle cx="6" cy="16.800" r="1.900" />
          </Ico>
        </HelpSlot>
      </ToolBar>
      <ToolBar>
        <ToolCell><ActiveTool><Ico>{tools.select}</Ico></ActiveTool></ToolCell>
        <Tools names={drawTools} />
      </ToolBar>

      <NavBar>
        <Pill $w={95} $on $fs={18} $pl={4} $gap={1}>
          <svg width="20" height="16" viewBox="0 0 20 16" fill="#fff">
            <path d="M3 9.500L9 3l7 10" fill="none" stroke="#fff" strokeWidth="1" />
            <circle cx="9.500" cy="3" r="2.600" /><circle cx="2.800" cy="10.500" r="2.600" /><circle cx="16" cy="13" r="2.600" />
          </svg>
          Logical
        </Pill>
        <Pill $w={99} $ml={2} $fs={16.5} $pl={6} $gap={5}>
          <svg width="15" height="19" fill="none" stroke="#8090aa"><path d="M.5.5h14v18H.5zM.5 4.500h14M.5 8.500h14M.5 12.500h14M.5 15.500h14" /></svg>
          Physical
        </Pill>
        <Coords>x: 4, y: 238</Coords>
        <Spacer />
        <span>Root</span>
        <RoundGrey $ml={6}>
          <svg width="21" height="17" viewBox="0 0 21 17"><path d="M6 5.500h7c7 0 7 9 1 10" fill="none" stroke="#fff" strokeWidth="2.600" /><path d="M0 5.500L8 0v11z" fill="#fff" /></svg>
        </RoundGrey>
        <Pill $w={32} $ml={1} $center>
          <svg width="21" height="20" viewBox="0 0 21 20" fill="#fff">
            <path d="M4 13C-1 13-1 7 3 6 3-1 12-1 13 3c4-1 5 3 4 5 3 1 2 4 0 5z" />
            <path d="M13.700 10.500h3v3h3.300v3h-3.300v3h-3v-3h-3.200v-3h3.200z" stroke={NAVY} strokeWidth=".7" />
          </svg>
        </Pill>
        <RoundGrey $ml={1}>
          <svg width="20" height="20" viewBox="0 0 20 20" fill="#fff"><path d="M10 0l3.200 5H6.800zM10 20l3.200-5H6.800zM0 10l5-3.200v6.400zM20 10l-5-3.200v6.400z" /><circle cx="10" cy="10" r="1.700" /></svg>
        </RoundGrey>
        <Pill $w={32} $ml={1} $center>
          <svg width="20" height="16" viewBox="0 0 20 16" fill="#fff"><path d="M0 16l6-11 5 6 2-2 6 7z" /><circle cx="16.500" cy="3" r="3" /></svg>
        </Pill>
        <Pill $w={82} $ml={1} $pl={4} $gap={2}>
          <svg width="20" height="20" viewBox="0 0 20 20" fill="none" stroke="#fff">
            <circle cx="7" cy="13" r="6" fill="#fff" />
            <path d="M1 11h12M1 15h12M7 7v12M4 8q-2 5 0 10M10 8q2 5 0 10" stroke={NAVY} strokeWidth=".7" />
            <path d="M12 2.500h8M11 6.500h8" strokeWidth="1.600" />
            <path d="M10 2.500L14 0v5zM20 6.500L16 4v5z" fill="#fff" stroke="none" />
          </svg>
          19:03:00
        </Pill>
      </NavBar>

      <Main>
        <Workspace>
          <Canvas>
            <CyanArea />
            <Topology width="1564" height="698" viewBox="1 153 1564 698">
              <path d="M286 433.700L502 431.300" stroke="#000" strokeWidth="3" />
              <path d="M502 431L700 432.600" stroke="#000" strokeWidth="3" />
              <path d="M260 419l2-1.500h30v23h-32z" fill="#066d8d" />
              <path d="M260 418.500h29V441h-29z" fill="#529ab1" />
              <rect x="262" y="421" width="25" height="17" rx="1" fill="#d3e4ea" />
              <path d="M260 441.500h28v2.500h-28zM263 444h24v2h-24z" fill="#3b7f98" />
              <path d="M259 447h28l3 6h-35z" fill="#8db5c2" />
              <rect x="276.700" y="434.800" width="26.300" height="19.300" fill="#f00ff0" stroke="#000" strokeWidth="1.500" />
              <path d="M277 435l11 11q3 1.500 5 0l10-11M277 454l10-9M303 454l-9-9" fill="none" stroke="#000" strokeWidth="1.300" />
              <path d="M279 446l7-1-1 8z" fill="#9cc92e" stroke="#222" strokeWidth=".6" />
              {[[318, 426], [461, 425.300], [543, 424.300]].map(([x, y]) => (
                <path key={x} d={`M${x} ${y}l7 14h-14z`} fill="#6cc24a" />
              ))}
              <path d="M486 420l3-3h30l-3 3z" fill="#8dbccb" />
              <path d="M516 420l3-3v27l-3 3z" fill="#066d8d" />
              <path d="M486 420h30v27h-30z" fill="#529ab1" />
              <path d="M491 425v18M497 425v18M504.500 423v22" stroke="#b4d3dc" />
              <path d="M492 425v18M498.500 425v18M501 425v18" stroke="#2d7690" />
            </Topology>
            <NodeLabel $x={277} $y={302}>PC-PT<br />Etudiant 2</NodeLabel>
            <NodeLabel $x={503} $y={296}>Hub-PT<br />Hub0</NodeLabel>
          </Canvas>
          <VBar><VThumb /></VBar>
          <HBar $pl={21}><HThumb $w={594} /></HBar>
        </Workspace>

        <SimPanel>
          <DockTitle>
            <span>Simulation Panel</span>
            <Spacer />
            <svg width="17" height="18" viewBox="0 0 17 18" fill={INK}><path d="M4 0h13v11h-5V9h3V5H6v2H4zM0 7h12v11H0zM2 11v5h8v-5z" fillRule="evenodd" /></svg>
            <svg width="16" height="16" stroke={INK} strokeWidth="3.800"><path d="M1.500 1.500l13 13M14.500 1.500l-13 13" /></svg>
          </DockTitle>
          <Group $h={420} $mt={2}>
            <GroupTitle $h={21}>Event List</GroupTitle>
            <EventTable>
              <EventHead>
                <HeadCell>Vis.</HeadCell><HeadCell>Time(sec)</HeadCell><HeadCell $last>Last Device</HeadCell>
              </EventHead>
              {events.map(([t, d], i) => {
                const sel = i === 4;
                return (
                  <EventRow key={t} $alt={i % 2 === 1}>
                    <EventCell $sel={sel} $fill $ml={1}>{sel && <Eye />}</EventCell>
                    <EventCell $sel={sel}>{t}</EventCell>
                    <EventCell $sel={sel}>{d}</EventCell>
                  </EventRow>
                );
              })}
              <Spacer />
              <HBar $pl={21}><HThumb $w={127} /></HBar>
            </EventTable>
            <SimControls>
              <DarkButton $w={109} $h={30}>Reset Simulation</DarkButton>
              <Check><svg width="10" height="8" fill="none" stroke="#fff" strokeWidth="1.200"><path d="M1 4l2.700 2.700L9 1" /></svg></Check>
              <span>Constant Delay</span>
              <Captured>Captured to:<br />0.004 s</Captured>
              <Star>*</Star>
            </SimControls>
          </Group>
          <Group $h={81} $mt={1}>
            <GroupTitle $h={22}>Play Controls</GroupTitle>
            <PlayButtons>
              <DarkButton $w={34} $h={30}><Prev /></DarkButton>
              <DarkButton $w={34} $h={30}><Play s={0.95} /></DarkButton>
              <DarkButton $w={34} $h={30}><Next /></DarkButton>
            </PlayButtons>
            <SliderTrack><SliderThumb /></SliderTrack>
          </Group>
          <Group $h={183} $mt={1}>
            <GroupTitle $h={22}>Event List Filters - Visible Events</GroupTitle>
            <FilterText>{filters.map((f) => <div key={f}>{f}</div>)}</FilterText>
            <FilterButtons>
              <DarkButton $w={158} $h={26}>Edit Filters</DarkButton>
              <DarkButton $w={157} $h={26}>Show All/None</DarkButton>
            </FilterButtons>
          </Group>
        </SimPanel>
      </Main>

      <TimeBar>
        <span>Time: 00:42:22.752</span>
        <Pill $w={32} $h={28} $center>
          <svg width="19" height="21" viewBox="0 0 19 21" fill="none" stroke="#fff" strokeWidth="2"><path d="M13.500 5A8 8 0 1 1 5 5" /><path d="M12 0v6L6 3z" fill="#fff" stroke="none" /><circle cx="9.500" cy="12" r=".8" strokeWidth="1" /></svg>
        </Pill>
        <span>PLAY CONTROLS:</span>
        <Pill $w={36} $h={32} $r={9} $center><Prev s={0.95} /></Pill>
        <Pill $w={36} $h={32} $r={9} $center><Play s={0.95} /></Pill>
        <Pill $w={36} $h={32} $r={9} $center><Next s={0.95} /></Pill>
        <Spacer />
        <Pill $w={91} $h={30} $bw={2} $on $pl={3} $gap={3} $r={12}>
          <svg width="20" height="20" viewBox="0 0 20 20" fill="none" stroke="#fff" strokeWidth="1.700"><path d="M0 1.500h18M1 5.500h18M0 9.500h18M1 13.500h8M2 17.500h7" /><ellipse cx="14" cy="15.500" rx="4.500" ry="3" fill={TEAL} strokeWidth="1.500" /><circle cx="14" cy="15.500" r="1" fill="#fff" /></svg>
          Event List
        </Pill>
        <Pill $w={102} $h={29} $ml={3} $fs={16.7} $pl={3} $gap={2}>
          <svg width="21" height="21" viewBox="0 0 21 21"><circle cx="10.500" cy="10.500" r="10.500" fill="#fff" /><path d="M10.500 5v6l3 3" fill="none" stroke={NAVY} strokeWidth="1.500" /></svg>
          Realtime
        </Pill>
        <Pill $w={124} $h={29} $ml={2} $on $fs={18} $pl={3} $gap={3}>
          <svg width="20" height="18" viewBox="0 0 20 18" fill="#fff"><path d="M7 0h6v2c3 1 4 4 4 7h-1v2h3l1 7H0l1-7h3V9H3c0-3 1-6 4-7z" /><path d="M6 7h8M7 13h6" stroke={TEAL} strokeWidth="1.500" /></svg>
          Simulation
        </Pill>
      </TimeBar>

      <DeviceArea>
        <Categories>
          <CategoryRow>
            <CategoryCell><NetDevices /></CategoryCell>
            <EndDevices />
            <Board />
            <Bolt />
            <Folder3D />
            <CloudIcon lines />
          </CategoryRow>
          <SearchBox />
          <CategoryRow>
            <CategoryCell><Router w={28} h={19} /></CategoryCell>
            <svg width="28" height="16" viewBox="0 0 28 16"><path d="M0 8l9-8h19l-6 8z" fill="#8dbccb" /><path d="M0 8h22v8H0z" fill="#529ab1" /><path d="M22 8l6-8v8l-6 8z" fill="#066d8d" /><path d="M9 5.500h5M14 3h6" stroke="#fff" strokeWidth="1.200" /></svg>
            <Box3D w={23} h={20}><path d="M4 6v11M7 6v11M11 6v11M14 6v11" stroke="#2d7690" /></Box3D>
            <Box3D w={26} h={18}><g fill="none" stroke="#fff" strokeWidth="1.300"><path d="M5 6q-2 4 0 8M8 7q-2 3 0 6M15 7q2 3 0 6M18 6q2 4 0 8" /><circle cx="11.500" cy="10" r="1" fill="#fff" /></g></Box3D>
            <Firewall />
            <CloudIcon />
          </CategoryRow>
        </Categories>
        <DeviceColumn>
          <DeviceList>
            <DeviceRow>
              {devices.map((d) => (
                <DeviceTile key={d} $tight={d.startsWith("PT")}>
                  <Router />
                  <span>{d}</span>
                </DeviceTile>
              ))}
            </DeviceRow>
            <HBar $pl={21}><HThumb $w={122} /></HBar>
          </DeviceList>
          <DeviceName>1841</DeviceName>
        </DeviceColumn>
        <Expander>
          <ExpanderGrip><svg width="8" height="11"><path d="M0 0v11l8-5.500z" fill="#5c5c5c" /></svg></ExpanderGrip>
        </Expander>
        <Scenario>
          <ScenarioRow $m="0 0 0 9px" $gap={10}>
            <DarkButton $w={34} $h={30}>
              <svg width="20" height="20"><circle cx="10" cy="10" r="10" fill="#fff" /><path d="M10 8.500v6M10 5v1.800" stroke="#74808f" strokeWidth="1.500" /></svg>
            </DarkButton>
            <Combo>Scenario 0<svg width="10" height="6" fill="none" stroke="#666"><path d="M.5.5L5 5 9.500.5" /></svg></Combo>
          </ScenarioRow>
          <ScenarioRow $m="8px 0 0 23px" $gap={25}>
            <DarkButton $w={35} $h={26}>New</DarkButton>
            <DarkButton $w={47} $h={26}>Delete</DarkButton>
          </ScenarioRow>
          <ScenarioRow $m="8px 0 0 0"><DarkButton $w={153} $h={26} $r={6}>Toggle PDU List Window</DarkButton></ScenarioRow>
        </Scenario>
        <PduTable>
          <PduHead>{pduHeads.map((h, i) => <HeadCell key={h} $last={i === 10}>{h}</HeadCell>)}</PduHead>
          <PduRow>
            <FireCell><svg width="17" height="15" viewBox="0 0 17 15"><ellipse cx="9" cy="8" rx="9" ry="6.500" fill="#0c2038" /><ellipse cx="9.500" cy="6" rx="6" ry="4.500" fill="#8e1f32" /><ellipse cx="9.500" cy="4.500" rx="4.500" ry="3" fill="#a5283b" /></svg></FireCell>
            <PduCell>Successful</PduCell>
            <PduCell $left $pl={6}>Etudi…</PduCell>
            <PduCell>Etudiant 3</PduCell>
            <PduCell>ICMP</PduCell>
            <Swatch />
            <PduCell>0.000</PduCell>
            <PduCell>N</PduCell>
            <PduCell>0</PduCell>
            <PduCell>(edit)</PduCell>
            <PduCell>(delete)</PduCell>
          </PduRow>
        </PduTable>
      </DeviceArea>

      <TaskBar>
        <Weather>
          <svg width="30" height="28" viewBox="0 0 30 28">
            <defs><linearGradient id="sun" x1="0" y1="0" x2="0" y2="1"><stop offset="0" stopColor="#f08a1e" /><stop offset="1" stopColor="#f6a627" /></linearGradient></defs>
            <circle cx="15" cy="14.500" r="13" fill="url(#sun)" />
            <path d="M3 10c-4-1-4-5 0-6 1-4 7-5 9-1 5 0 6 6 2 7z" fill="#a3c1f2" />
            <path d="M15 26c-4-1-4-5 0-6 2-5 8-5 10-1 5 0 6 6 2 7z" fill="#9dbdf3" />
          </svg>
          <div>31°C<Muted>Eclaircies</Muted></div>
        </Weather>
        <svg width="29" height="29" viewBox="0 0 29 29">
          <defs><linearGradient id="win" x1="0" y1="0" x2="1" y2="1"><stop offset="0" stopColor="#7fdcfd" /><stop offset="1" stopColor="#0c95f5" /></linearGradient></defs>
          <path d="M0 0h14v14H0zM15 0h14v14H15zM0 15h14v14H0zM15 15h14v14H15z" fill="url(#win)" />
        </svg>
        <TaskSearch>
          <svg width="18" height="19" viewBox="0 0 18 19" fill="none" stroke="#ddd" strokeWidth="2"><circle cx="7.500" cy="7.500" r="6.300" /><path d="M12 12.500l5 5.500" strokeWidth="2.600" /></svg>
          <SearchWord>Search</SearchWord>
          <svg width="58" height="30" viewBox="0 0 58 30">
            <path d="M17 16l8-9 5-4 6 3 4 3 6 6v4H17z" fill="#9a83c9" />
            <path d="M25 7l5-4 3 1.500L30 9z" fill="#d3bfe6" />
            <path d="M0 23C3 12 12 9 20 12l10 8-12 8H3z" fill="#eab634" />
            <path d="M4 26C16 12 50 10 58 22c-2 6-8 6-15 6H10z" fill="#5da329" />
            <path d="M18 28c0-5 4-9 9-12M26 28c0-5 4-10 9-13M35 28c2-6 2-9 6-13M44 27c2-5 2-8 5-11M10 26q3-5 9-8" stroke="#c9e04c" strokeWidth="1.500" fill="none" />
            <path d="M12 11V6" stroke="#6b3b1a" strokeWidth="1.400" /><circle cx="12.500" cy="4" r="3.400" fill="#4c8b2b" />
          </svg>
        </TaskSearch>
        {taskApps.map((a, i) => {
          const Tile = a.active ? ActiveTile : TaskTile;
          return (
            <TaskItem key={i}>
              <Tile $shift={a.shift}>{a.icon}{a.badge && <Badge>{a.badge}</Badge>}</Tile>
              {(a.dot || a.active) && <Dot $wide={a.active} />}
            </TaskItem>
          );
        })}
        <Tray>
          <TrayChevron>
            <svg width="14" height="9" fill="none" stroke="#fff" strokeWidth="2.200"><path d="M1 8l6-6 6 6" /></svg>
          </TrayChevron>
          <svg width="22" height="16" viewBox="0 0 22 16" fill="none" stroke="#fff" strokeWidth="1.600"><path d="M1.500 6.500a13.500 13.500 0 0 1 19 0M4.500 9.500a9.200 9.200 0 0 1 13 0M7.500 12.300a5 5 0 0 1 7 0" /><circle cx="11" cy="14.500" r="1.200" fill="#fff" /></svg>
          <svg width="20" height="17" viewBox="0 0 20 17" fill="none" stroke="#fff" strokeWidth="1.400"><path d="M1 6v5h3l4 4.500v-14L4 6zM11 5q3 3.500 0 7M13.500 3q4.500 5.500 0 11M16 1q6 7.500 0 15" /></svg>
          <svg width="21" height="17" viewBox="0 0 21 17" fill="none" stroke="#fff" strokeWidth="1.500"><path d="M7 4h9q2 0 2 2v7q0 2-2 2H3q-2 0-2-2V9M19.800 7v5" /><path d="M6 6.500h6V13H3v-2.500z" fill="#fff" stroke="none" /><path d="M4 0L0 6h3L2 10l5-6H4z" fill="#fff" stroke="none" /></svg>
          <Clock>17:01<br />01/11/2024</Clock>
          <svg width="17" height="21" viewBox="0 0 17 21" fill="#fba07e"><path d="M2 8c0-11 13-11 13 0v5l2 3H0l2-3zM5.500 18h6q-3 5-6 0z" /></svg>
        </Tray>
      </TaskBar>

      <Dialog>
        <DialogTitle>
          PDU Information at Device: Etudiant 2
          <CloseRed><svg width="7" height="7" stroke="#fff" strokeWidth="1.800"><path d="M.5.5l6 6M6.500.5l-6 6" /></svg></CloseRed>
        </DialogTitle>
        <Tabs>
          <Tab $w={91} $on>OSI Model</Tab>
          <Tab $w={157}>Inbound PDU Details</Tab>
        </Tabs>
        <DialogBody>
          <LineBox $h={52} $p="2px 3px 0">At Device: Etudiant 2<br />Source: Etudiant 2<br />Destination: Etudiant 3</LineBox>
          <LayerColumns>
            <LayerList title="In Layers" rows={inLayers} />
            <LayerList title="Out Layers" rows={outLayers} />
          </LayerColumns>
          <Collapse><svg width="33" height="10"><path d="M1 9.500L16.500 1 32 9.500z" fill="#fdfdfd" stroke="#c6c6c6" /></svg></Collapse>
          <LineBox $h={208} $p="5px 4px">
            1. The frame's destination MAC address matches the receiving port's MAC address, the broadcast<br />
            address, or a multicast address.<br />
            2. The device decapsulates the PDU from the Ethernet frame.
          </LineBox>
          <DialogButtons>
            <LightButton $w={91}>Challenge Me</LightButton>
            <Spacer />
            <LightButton $w={118}>&lt;&lt; Previous Layer</LightButton>
            <LightButton $w={118} $focus>Next Layer &gt;&gt;</LightButton>
          </DialogButtons>
        </DialogBody>
      </Dialog>
    </Page>
  );
}
